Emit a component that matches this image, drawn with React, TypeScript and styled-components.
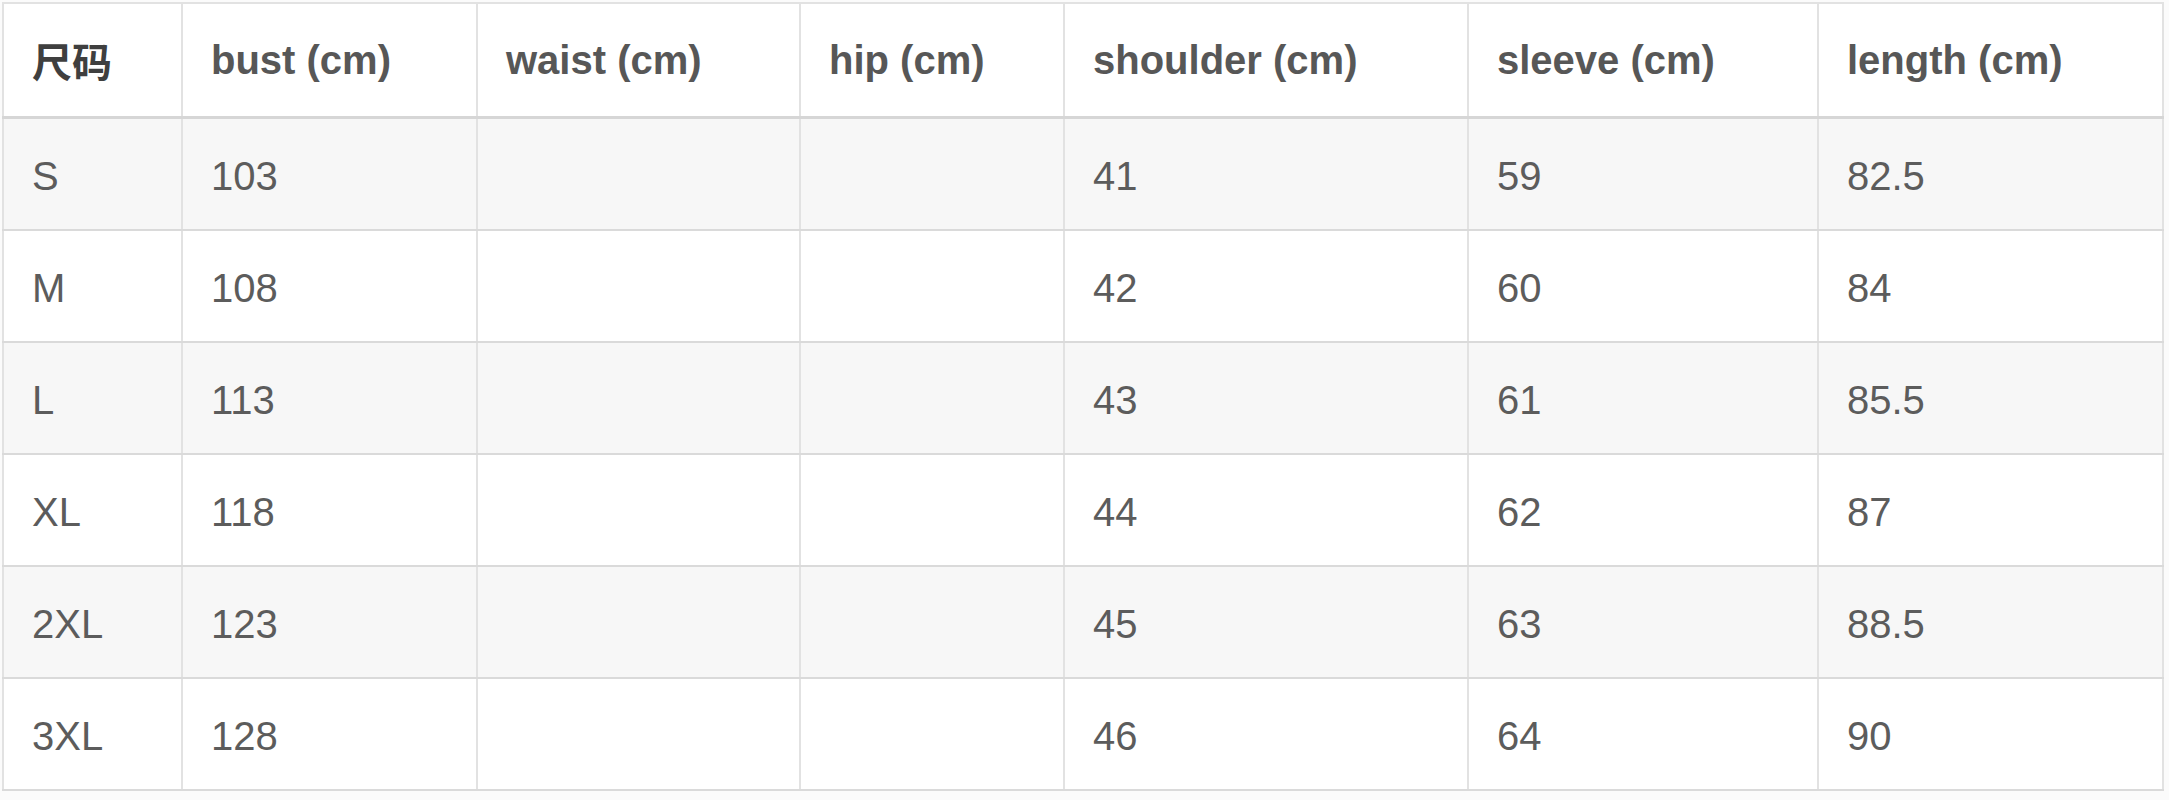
import React from 'react';
import styled, { createGlobalStyle } from 'styled-components';

const GlobalStyle = createGlobalStyle`
    body {
        margin: 0;
        padding: 2px 0 0 2px;
        background: #fbfbfb;
        font-family: "Liberation Sans", Arial, "Noto Sans CJK SC", sans-serif;
    }
`;

const Table = styled.table`
    width: 2160px;
    border-collapse: collapse;
    table-layout: fixed;
    background: #fff;
`;

const HeadCell = styled.th`
    height: 112px;
    padding: 0 0 0 28px;
    text-align: left;
    font-size: 40px;
    font-weight: bold;
    color: #575757;
    border: 2px solid #e2e2e2;
    border-bottom: 3px solid #d6d6d6;
    white-space: nowrap;
`;

const Row = styled.tr<{ $striped: boolean }>`
    background: ${(p) => (p.$striped ? '#f7f7f7' : '#ffffff')};
`;

const Cell = styled.td`
    height: 106px;
    padding: 4px 0 0 28px;
    font-size: 40px;
    color: #5c5c5c;
    border: 2px solid #e2e2e2;
    border-bottom-color: #dadada;
    white-space: nowrap;
`;

const CjkLabel = styled.span`
    font-family: "Noto Sans CJK SC", sans-serif;
    font-size: 40px;
    color: #3f3f3f;
`;

const widths = [179, 295, 323, 264, 404, 350, 345];
const headers = ['bust (cm)', 'waist (cm)', 'hip (cm)', 'shoulder (cm)', 'sleeve (cm)', 'length (cm)'];

const rows = [
    ['S', '103', '', '', '41', '59', '82.5'],
    ['M', '108', '', '', '42', '60', '84'],
    ['L', '113', '', '', '43', '61', '85.5'],
    ['XL', '118', '', '', '44', '62', '87'],
    ['2XL', '123', '', '', '45', '63', '88.5'],
    ['3XL', '128', '', '', '46', '64', '90'],
];

export default function App() {
    return (
        <>
            <GlobalStyle />
            <Table>
                <colgroup>
                    {widths.map((w, i) => (
                        <col key={i} style={{ width: w }} />
                    ))}
                </colgroup>
                <thead>
                    <tr>
                        <HeadCell>
                            <CjkLabel>尺码</CjkLabel>
                        </HeadCell>
                        {headers.map((h) => (
                            <HeadCell key={h}>{h}</HeadCell>
                        ))}
                    </tr>
                </thead>
                <tbody>
                    {rows.map((r, i) => (
                        <Row key={r[0]} $striped={i % 2 === 0}>
                            {r.map((v, j) => (
                                <Cell key={j}>{v}</Cell>
                            ))}
                        </Row>
                    ))}
                </tbody>
            </Table>
        </>
    );
}
